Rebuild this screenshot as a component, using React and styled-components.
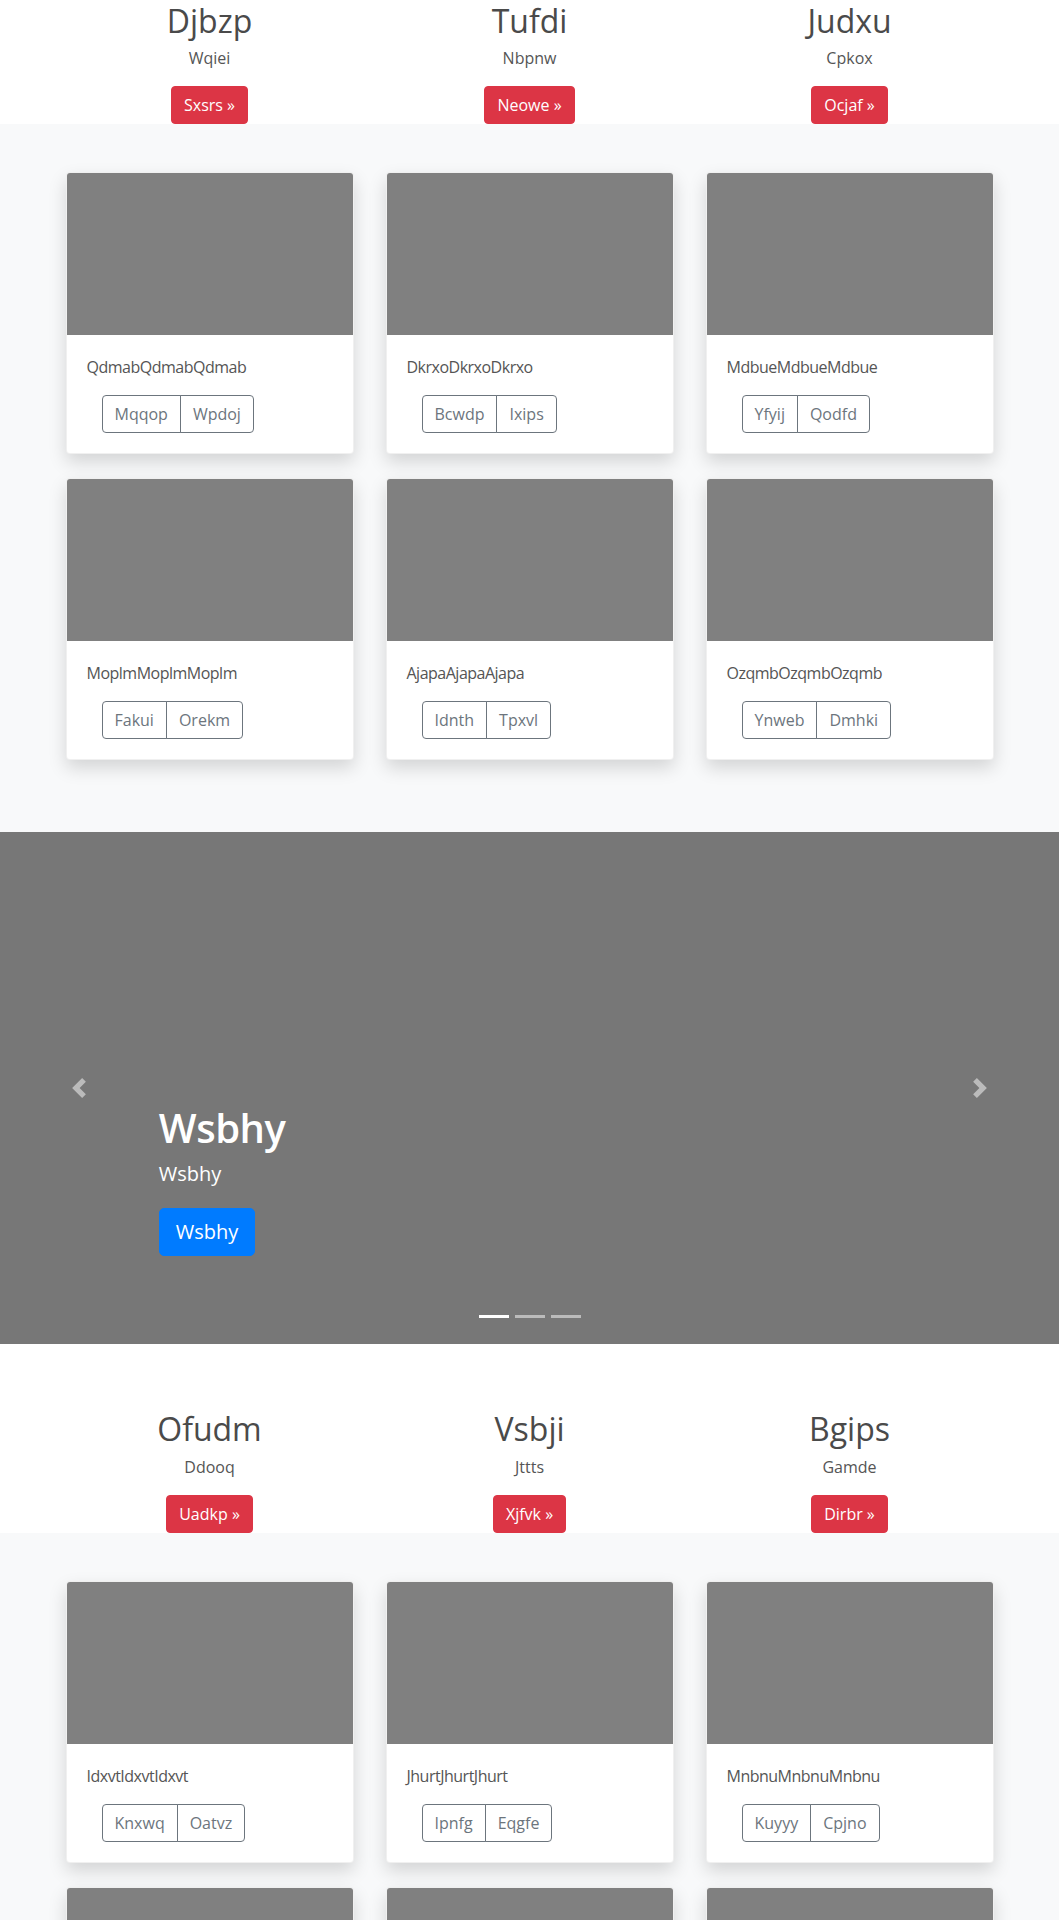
import styled, { createGlobalStyle } from "styled-components";

const GlobalStyle = createGlobalStyle`
  body {
    margin: 0;
    background: #ffffff;
    color: #555555;
    font-family: "Open Sans", "Noto Sans", sans-serif;
    font-size: 16px;
    line-height: 1.5;
  }
  * {
    box-sizing: border-box;
  }
`;

const marketingTop = [
  { title: "Djbzp", sub: "Wqiei", btn: "Sxsrs" },
  { title: "Tufdi", sub: "Nbpnw", btn: "Neowe" },
  { title: "Judxu", sub: "Cpkox", btn: "Ocjaf" },
];

const cardsTop = [
  { text: "Qdmab", a: "Mqqop", b: "Wpdoj" },
  { text: "Dkrxo", a: "Bcwdp", b: "Ixips" },
  { text: "Mdbue", a: "Yfyij", b: "Qodfd" },
  { text: "Moplm", a: "Fakui", b: "Orekm" },
  { text: "Ajapa", a: "Idnth", b: "Tpxvl" },
  { text: "Ozqmb", a: "Ynweb", b: "Dmhki" },
];

const marketingBottom = [
  { title: "Ofudm", sub: "Ddooq", btn: "Uadkp" },
  { title: "Vsbji", sub: "Jttts", btn: "Xjfvk" },
  { title: "Bgips", sub: "Gamde", btn: "Dirbr" },
];

const cardsBottom = [
  { text: "Idxvt", a: "Knxwq", b: "Oatvz" },
  { text: "Jhurt", a: "Ipnfg", b: "Eqgfe" },
  { text: "Mnbnu", a: "Kuyyy", b: "Cpjno" },
  { text: "Rwkle", a: "Tbosu", b: "Hazri" },
  { text: "Ucfan", a: "Zmeol", b: "Gyrtd" },
  { text: "Plevq", a: "Nuxaw", b: "Skbif" },
];

const Marketing = ({ items }) => (
  <StMarketing>
    <StContainer>
      <StRow>
        {items.map((item) => (
          <StFeature key={item.title}>
            <StFeatureTitle>{item.title}</StFeatureTitle>
            <StFeatureText>{item.sub}</StFeatureText>
            <StDangerBtn href="#">{item.btn} &raquo;</StDangerBtn>
          </StFeature>
        ))}
      </StRow>
    </StContainer>
  </StMarketing>
);

const Album = ({ cards }) => (
  <StAlbum>
    <StContainer>
      <StRow>
        {cards.map((card) => (
          <StCard key={card.text}>
            <StCardImg />
            <StCardBody>
              <StCardText>{card.text.repeat(3)}</StCardText>
              <StBtnGroup>
                <StOutlineBtn>{card.a}</StOutlineBtn>
                <StOutlineBtn>{card.b}</StOutlineBtn>
              </StBtnGroup>
            </StCardBody>
          </StCard>
        ))}
      </StRow>
    </StContainer>
  </StAlbum>
);

const Carousel = () => (
  <StCarousel>
    <StIndicators>
      <StIndicator $active />
      <StIndicator />
      <StIndicator />
    </StIndicators>
    <StCaption>
      <StCaptionTitle>Wsbhy</StCaptionTitle>
      <StCaptionText>Wsbhy</StCaptionText>
      <p>
        <StPrimaryBtn href="#">Wsbhy</StPrimaryBtn>
      </p>
    </StCaption>
    <StControl $side="left" aria-label="Previous">
      <svg width="20" height="20" viewBox="0 0 8 8" fill="#fff">
        <path d="M5.25 0l-4 4 4 4 1.5-1.5L4.25 4l2.5-2.5L5.25 0z" />
      </svg>
    </StControl>
    <StControl $side="right" aria-label="Next">
      <svg width="20" height="20" viewBox="0 0 8 8" fill="#fff">
        <path d="M2.75 0l-1.5 1.5L3.75 4l-2.5 2.5L2.75 8l4-4-4-4z" />
      </svg>
    </StControl>
  </StCarousel>
);

const App = () => {
  return (
    <>
      <GlobalStyle />
      <Marketing items={marketingTop} />
      <Album cards={cardsTop} />
      <Carousel />
      <Marketing items={marketingBottom} />
      <Album cards={cardsBottom} />
    </>
  );
};

export default App;

// st

const StContainer = styled.div`
  max-width: 960px;
  margin: 0 auto;
  padding: 0 16px;
`;

const StRow = styled.div`
  display: grid;
  grid-template-columns: repeat(3, 1fr);
  column-gap: 32px;
`;

const StMarketing = styled.section`
  background: #ffffff;
`;

const StFeature = styled.div`
  text-align: center;
`;

const StFeatureTitle = styled.h2`
  margin: 2px 0 6px;
  font-size: 32px;
  font-weight: 500;
  line-height: 1.2;
  color: #4a4a4a;
`;

const StFeatureText = styled.p`
  margin: 0 0 16px;
  font-size: 16px;
  line-height: 24px;
`;

const StDangerBtn = styled.a`
  display: inline-block;
  vertical-align: top;
  padding: 6px 12px;
  font-size: 16px;
  line-height: 24px;
  color: #ffffff;
  background-color: #dc3545;
  border: 1px solid #dc3545;
  border-radius: 4px;
  text-decoration: none;
`;

const StAlbum = styled.section`
  background: #f8f9fa;
  padding: 48px 0;
`;

const StCard = styled.div`
  margin-bottom: 24px;
  background: #ffffff;
  border: 1px solid rgba(0, 0, 0, 0.06);
  border-radius: 4px;
  box-shadow: 0 8px 18px rgba(0, 0, 0, 0.15);
  overflow: hidden;
`;

const StCardImg = styled.div`
  height: 162px;
  background: #808080;
`;

const StCardBody = styled.div`
  padding: 20px;
`;

const StCardText = styled.p`
  margin: 0 0 16px;
  font-size: 16px;
  line-height: 24px;
  letter-spacing: -0.5px;
`;

const StBtnGroup = styled.div`
  display: inline-flex;
  margin-left: 15px;
`;

const StOutlineBtn = styled.button`
  padding: 6px 12px;
  font-family: inherit;
  font-size: 16px;
  line-height: 24px;
  color: #6c757d;
  background: transparent;
  border: 1px solid #6c757d;
  &:first-child {
    border-radius: 4px 0 0 4px;
  }
  &:last-child {
    margin-left: -1px;
    border-radius: 0 4px 4px 0;
  }
`;

const StCarousel = styled.div`
  position: relative;
  height: 512px;
  margin-bottom: 64px;
  background: #777777;
  overflow: hidden;
`;

const StCaption = styled.div`
  position: absolute;
  left: 15%;
  right: 15%;
  bottom: 48px;
  padding: 20px 0;
  color: #ffffff;
  text-align: left;
  z-index: 10;

  p {
    margin: 0 0 20px;
  }
`;

const StCaptionTitle = styled.h1`
  margin: 0 0 8px;
  font-size: 40px;
  font-weight: 600;
  line-height: 1.2;
  letter-spacing: -0.5px;
`;

const StCaptionText = styled.p`
  font-size: 20px;
  line-height: 1.4;
`;

const StPrimaryBtn = styled.a`
  display: inline-block;
  padding: 8px 16px;
  font-size: 20px;
  line-height: 30px;
  color: #ffffff;
  background-color: #007bff;
  border: 1px solid #007bff;
  border-radius: 5px;
  text-decoration: none;
`;

const StControl = styled.a`
  position: absolute;
  top: 0;
  bottom: 0;
  ${({ $side }) => ($side === "left" ? "left: 0;" : "right: 0;")}
  width: 15%;
  display: flex;
  align-items: center;
  justify-content: center;
  opacity: 0.5;
  z-index: 5;
`;

const StIndicators = styled.ol`
  position: absolute;
  left: 0;
  right: 0;
  bottom: 0;
  display: flex;
  justify-content: center;
  margin: 0 0 16px;
  padding: 0;
  list-style: none;
  z-index: 15;
`;

const StIndicator = styled.li`
  width: 30px;
  height: 3px;
  box-sizing: content-box;
  margin: 0 3px;
  border-top: 10px solid transparent;
  border-bottom: 10px solid transparent;
  background-color: #ffffff;
  background-clip: padding-box;
  opacity: ${({ $active }) => ($active ? 1 : 0.5)};
`;
